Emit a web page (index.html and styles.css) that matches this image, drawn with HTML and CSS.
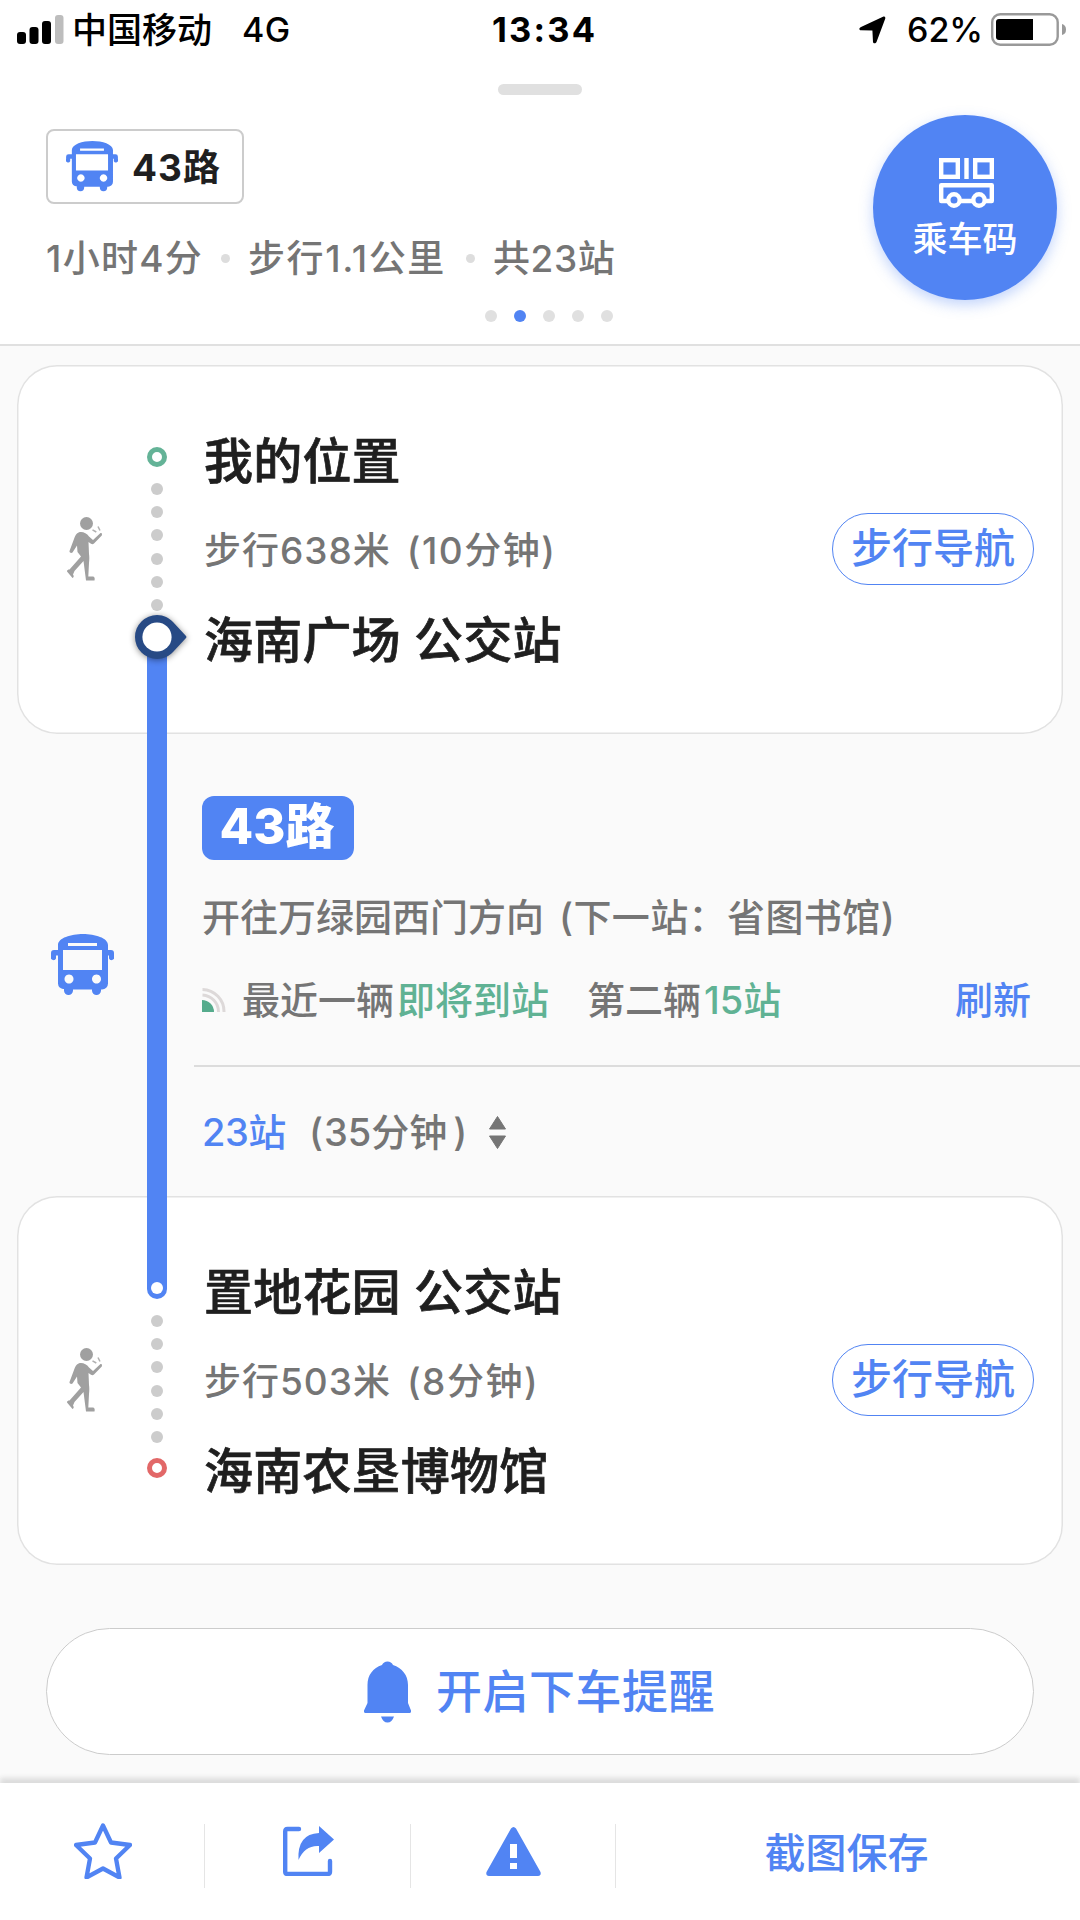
FILE: index.html
```html
<!DOCTYPE html>
<html lang="zh-CN">
<head>
<meta charset="utf-8">
<title>43路 公交路线</title>
<link rel="stylesheet" href="styles.css">
</head>
<body>
<svg class="defs" aria-hidden="true">
  <symbol id="bus" viewBox="0 0 63 62">
    <path fill-rule="evenodd" d="M7 11C7 4 20 0 32 0s25 4 25 11v5h3a3 3 0 0 1 3 3v3a2.500 2.500 0 0 1-5 2.500v-3h-1v28a6 6 0 0 1-6 6h-1v1a4.500 4.500 0 0 1-9 0v-1H22v1a4.500 4.500 0 0 1-9 0v-1.500h-1a6 6 0 0 1-5-5.500V21.500H5v3A2.500 2.500 0 0 1 0 22v-3a3 3 0 0 1 3-3h4zM17 9v3h29V9zM12 16v20h39V16zM18 40.500a4.500 4.500 0 1 0 .01 0zM45.500 40.500a4.500 4.500 0 1 0 .01 0z"/>
  </symbol>
  <symbol id="walker" viewBox="0 0 35 64">
    <ellipse cx="19.500" cy="6.500" rx="6.500" ry="6.500"/>
    <path d="M14 15c3 0 6 1.500 8 4.500l4 3.500 7.500-7c1.300-.5 1.800.8 1.300 2.500l-7.800 8c-1 1-2 1-3 .3L21.500 25l.5 12c.5 3 .3 6 0 9l-.7 13.500h4.700c1.600 0 2 1.800 1.500 4h-8.500L16.500 44l-9 10-1.500 3.500c1.200 1.500.8 3-.5 3.500L0 54.500c0-1.500 1-2 2.500-2L14 39.500 10.500 35 10 28.500l-4.500 7c-.9 1-3.300.5-3-1.500l4.500-12c1.500-4.500 3.500-7 7-7z"/>
    <path d="M25.500 12.800l3.800 2.200M31 9.500l2 4" fill="none" stroke="#b0b0b0" stroke-width="1.500"/>
  </symbol>
</svg>

<header class="status">
  <svg class="signal" viewBox="0 0 47 30"><rect x="0" y="18" width="9" height="12" rx="3"/><rect x="12.500" y="13" width="9" height="17" rx="3"/><rect x="25" y="7" width="9" height="23" rx="3"/><rect x="38" y="1" width="8.500" height="29" rx="3" fill="#bdbdbd"/></svg>
  <span class="carrier">中国移动</span>
  <span class="network">4G</span>
  <span class="clock">13:34</span>
  <svg class="locate" viewBox="0 0 27 28"><path d="M2 11 24 .8c1.500-.6 2.700.4 2.200 2L17.500 26c-.7 1.800-3.300 1.800-3.500 0l-.6-11.500L2 14.200c-2.200-.2-2.200-2.200 0-3.200z"/></svg>
  <span class="percent">62%</span>
  <svg class="battery" viewBox="0 0 76 33"><rect x="1.200" y="1.200" width="65.500" height="30.600" rx="8" fill="none" stroke="#999" stroke-width="2.400"/><path d="M8 6h34v21H8a3 3 0 0 1-3-3V9a3 3 0 0 1 3-3z"/><path d="M71 11q4 1 4 5.500t-4 5.500z" fill="#999"/></svg>
</header>

<section class="summary">
  <div class="handle"></div>
  <div class="plan">
    <div class="plan-info">
      <div class="route"><svg class="route-bus"><use href="#bus"/></svg><span class="route-name">43路</span></div>
      <div class="facts"><span class="f1">1小时4分</span><i></i><span class="f2">步行1.1公里</span><i></i><span class="f3">共23站</span></div>
    </div>
    <button class="ride-code">
      <svg class="ride-icon" viewBox="0 0 55 50"><g fill="none" stroke="#fff" stroke-width="4.400"><rect x="2.200" y="2.200" width="16.600" height="16.600"/><path d="M27.500 0v21"/><rect x="36.200" y="2.200" width="16.600" height="16.600"/><path d="M8.500 43H2.200V27.200h50.600V43H47M21 43h13" stroke-linejoin="round"/><circle cx="15" cy="42" r="5.700"/><circle cx="40" cy="42" r="5.700"/></g></svg>
      <span>乘车码</span>
    </button>
  </div>
  <div class="pager"><i></i><i class="on"></i><i></i><i></i><i></i></div>
</section>

<main class="trip">
  <section class="card">
    <svg class="walk-icon"><use href="#walker"/></svg>
    <div class="rail rail-start">
      <b class="ring green"></b>
      <div class="steps"><i></i><i></i><i></i><i></i><i></i><i></i></div>
      <div class="line"><svg class="pin" viewBox="0 0 56 52"><path d="M24 4c7 0 12 3 16 7l13 14q1 1 0 2L40 41c-4 4-9 7-16 7a22 22 0 0 1 0-44z" fill="#274a85"/><circle cx="24" cy="26" r="14.600" fill="#fff"/></svg></div>
    </div>
    <div class="stops">
      <h2>我的位置</h2>
      <p>步行638米<span class="paren">(10分钟)</span></p>
      <h2>海南广场 公交站</h2>
    </div>
    <button class="nav">步行导航</button>
  </section>

  <section class="ride">
    <svg class="ride-bus"><use href="#bus"/></svg>
    <div class="rail"><div class="line"></div></div>
    <div class="ride-info">
      <span class="badge">43路</span>
      <p class="direction">开往万绿园西门方向<span class="next">(下一站：省图书馆)</span></p>
      <div class="arrivals">
        <svg class="live" viewBox="0 0 24 24"><path d="M0 12a12 12 0 0 1 12 12H0z" fill="#55ab8c"/><path d="M.500 7A17 17 0 0 1 16.500 24M.500 1.500a22 22 0 0 1 21.500 22.500" fill="none" stroke="#ddd9d9" stroke-width="3"/></svg>
        <span class="first">最近一辆<em>即将到站</em></span><span class="second">第二辆<em>15站</em></span>
        <a class="refresh">刷新</a>
      </div>
      <div class="count"><strong>23站</strong><span class="mins">(<span class="mins-value">35分钟</span>)</span>
        <svg class="sort" viewBox="0 0 17 33"><path d="M8.500.5 16.500 13H.5zM.500 20h16L8.500 32.500z" fill="#757575" stroke="#757575" stroke-linejoin="round"/></svg>
      </div>
    </div>
  </section>

  <section class="card">
    <svg class="walk-icon"><use href="#walker"/></svg>
    <div class="rail rail-end">
      <div class="line"><b class="stop-dot"></b></div>
      <div class="steps"><i></i><i></i><i></i><i></i><i></i><i></i></div>
      <b class="ring red"></b>
    </div>
    <div class="stops">
      <h2>置地花园 公交站</h2>
      <p>步行503米<span class="paren">(8分钟)</span></p>
      <h2>海南农垦博物馆</h2>
    </div>
    <button class="nav">步行导航</button>
  </section>

  <button class="remind">
    <svg class="bell" viewBox="0 0 47 62"><path d="M18 4a6 6 0 0 1 11 0c9 3 15 10 15 20v18l3 7.500q.5 2.500-1.500 2.500h-44Q-.5 52 0 49.500L3.500 42V24C3.500 14 9 7 18 4zM17 55.500h13q-2 6-6.500 6T17 55.500z" fill="#5184f3"/></svg>
    <span>开启下车提醒</span>
  </button>
</main>

<footer class="tabs">
  <a><svg class="star" viewBox="0 0 58 56"><path d="M29 2.500l8 17 19 2.500-14 13.500 3.500 19L29 45.500l-16.500 9 3.500-19L2 22l19-2.500z" fill="none" stroke="#5184f3" stroke-width="4.300" stroke-linejoin="round"/></svg></a>
  <a><svg class="share" viewBox="0 0 51 50"><path d="M16 3H4.500Q2.200 3 2.200 5.500v40Q2.200 48 4.500 48h40q2.500 0 2.500-2.500V35" fill="none" stroke="#5184f3" stroke-width="4.400" stroke-linecap="round"/><path d="M36 0l15 13.500L36 27v-7q-14-1-20.500 14Q14 8 36 7z" fill="#5184f3"/></svg></a>
  <a><svg class="warn" viewBox="0 0 55 49"><path fill-rule="evenodd" d="M25 1.500q2.500-3 5 0L54.500 45q1 4-2.500 4H3q-3.500 0-2.500-4zM24 17v14h7V17zM24 36v6h7v-6z" fill="#5184f3"/></svg></a>
  <a class="save">截图保存</a>
</footer>
</body>
</html>
```
FILE: styles.css
```css
* { box-sizing: border-box; }
body {
  margin: 0; width: 1080px; height: 1920px; overflow: hidden;
  display: flex; flex-direction: column;
  background: #fff; color: #1f1f1f;
  font-family: Inter, "Noto Sans CJK SC", sans-serif; font-weight: 500;
}
svg { display: block; flex: none; }
span, em, strong, a { white-space: nowrap; }
button { font: inherit; border: 0; padding: 0; background: none; color: #5184f3; }
h2, p { margin: 0; }
.defs { position: absolute; width: 0; height: 0; }

.status { height: 60px; display: flex; align-items: center; padding-left: 17px; color: #000; font-size: 34px; line-height: 60px; }
.signal { width: 47px; height: 30px; margin: 0 8px 2px 0; }
.carrier { width: 170px; font-size: 35px; }
.network { width: 250px; letter-spacing: .5px; }
.clock { width: 367px; font-size: 34.500px; font-weight: 700; letter-spacing: 2.200px; }
.locate { width: 27px; height: 28px; margin-right: 21px; }
.percent { width: 84px; }
.battery { width: 76px; height: 33px; margin-bottom: 2px; }

.summary { height: 286px; display: flex; flex-direction: column; align-items: center; border-bottom: 2px solid #e0e0e0; }
.handle { width: 84px; height: 11px; margin-top: 24px; border-radius: 6px; background: #e0e0e0; flex: none; }
.plan { width: 100%; display: flex; justify-content: space-between; padding: 20px 23px 0 46px; }
.plan-info { padding-top: 14px; }
.route { width: 198px; height: 75px; display: flex; align-items: center; gap: 14px; padding-left: 18px; border: 2.500px solid #ccc; border-radius: 8px; }
.route-bus { width: 52px; height: 51px; fill: #5184f3; }
.route-name { font-size: 37px; font-weight: 700; letter-spacing: 1px; padding-bottom: 4px; }
.facts { display: flex; align-items: center; margin-top: 29.500px; height: 50px; font-size: 37px; line-height: 50px; color: #757575; }
.facts i { width: 9px; height: 9px; border-radius: 50%; background: #ddd; }
.f1 { width: 175px; letter-spacing: 1.300px; }
.f2 { width: 218px; margin-left: 18px; letter-spacing: 1.600px; }
.f3 { margin-left: 18px; letter-spacing: .6px; }
.ride-code { width: 184px; height: 185px; border-radius: 50%; background: #5184f3; color: #fff; display: flex; flex-direction: column; align-items: center; padding-top: 43px; font-size: 35px; box-shadow: 0 5px 14px rgba(81,132,243,.35); }
.ride-icon { width: 55px; height: 50px; margin-left: 2px; }
.ride-code span { line-height: 50px; margin-top: 6px; }
.pager { display: flex; gap: 17px; margin-top: 10px; padding-left: 18px; }
.pager i { width: 12px; height: 12px; border-radius: 50%; background: #e0e0e0; }
.pager .on { background: #5184f3; }

.trip { height: 1437px; flex: none; background: #fafafa; padding-top: 19px; display: flex; flex-direction: column; }
.card { height: 369px; margin: 0 17px; background: #fff; border-radius: 40px; box-shadow: inset 0 0 0 1.500px #e2e2e2; display: grid; grid-template-columns: 130px 57px 1fr 202px; padding-right: 29px; }
.walk-icon { width: 35px; height: 64px; margin: 152px 0 0 50px; fill: #a0a0a0; }
.rail { display: flex; flex-direction: column; }
.line { width: 20px; background: #5184f3; position: relative; flex: 1; }
.rail-start { padding-top: 82px; }
.ring { width: 20px; height: 20px; border-radius: 50%; border: 5px solid; background: #fff; flex: none; }
.green { color: #64b397; }
.red { color: #e26868; }
.steps { display: flex; flex-direction: column; gap: 11.200px; padding-left: 4px; }
.steps i { width: 12px; height: 12px; border-radius: 50%; background: #ccc; }
.rail-start .steps { margin: 16px 0 26px; }
.pin { position: absolute; left: -14px; top: -26px; width: 56px; height: 52px; filter: drop-shadow(0 1px 3px rgba(0,0,0,.45)); }
.stops { padding-top: 61.500px; }
.stops h2 { font-size: 49px; line-height: 70px; font-weight: 500; white-space: nowrap; -webkit-text-stroke: .7px #1f1f1f; letter-spacing: .2px; }
.stops p { font-size: 37px; line-height: 52px; margin: 28.500px 0 29px; color: #757575; letter-spacing: 1px; }
.paren { margin-left: 16px; letter-spacing: 1.500px; }
.nav { width: 202px; height: 72px; margin-top: 148px; border: 1.500px solid #5184f3; border-radius: 37px; font-size: 41px; line-height: 66px; padding-bottom: 2px; }

.ride { height: 462px; display: grid; grid-template-columns: 147px 55px 1fr; }
.ride-bus { width: 63px; height: 62px; fill: #5184f3; margin: 200px 0 0 51px; }
.ride-info { display: flex; flex-direction: column; align-items: flex-start; padding-top: 62px; color: #757575; font-size: 38px; }
.badge { width: 152px; height: 64px; border-radius: 12px; background: #5184f3; color: #fff; font-size: 49px; line-height: 62px; font-weight: 800; text-align: center; padding-right: 2px; }
.direction { line-height: 54px; margin-top: 30px; }
.next { margin-left: 15px; letter-spacing: .4px; }
.arrivals { width: 100%; height: 54px; margin-top: 29px; display: flex; align-items: center; line-height: 54px; }
.live { width: 24px; height: 24px; margin-right: 16px; }
em { font-style: normal; color: #60b294; margin-left: 3px; }
.first { width: 345px; }
.refresh { margin-left: auto; padding-right: 49px; color: #5184f3; }
.count { align-self: stretch; margin: 38px 0 0 -8px; padding: 38px 0 0 8px; border-top: 2px solid #dcdcdc; display: flex; align-items: center; line-height: 54px; }
.count strong { color: #5184f3; font-weight: 500; width: 107px; letter-spacing: -.5px; }
.mins { width: 180px; }
.mins-value { margin: 0 6px 0 1px; }
.sort { width: 17px; height: 33px; }
.rail-end .line { flex: 0 0 103px; border-radius: 0 0 10px 10px; }
.stop-dot { position: absolute; left: 4px; top: 86px; width: 12px; height: 12px; border-radius: 50%; background: #fff; }
.rail-end .steps { margin: 16px 0 15px; }

.remind { width: 988px; height: 127px; margin: 63px 46px 0; border: 1.500px solid #ccc; border-radius: 64px; background: #fff; display: flex; align-items: center; padding-left: 317px; font-size: 46px; }
.bell { width: 47px; height: 62px; margin-right: 25px; }
.remind span { line-height: 64px; padding-bottom: 2px; letter-spacing: .5px; }

.tabs { height: 137px; flex: none; background: #fff; box-shadow: 0 -5px 5px #dcdcdc; display: grid; grid-template-columns: 205px 206px 205px 1fr; padding-top: 41px; z-index: 1; }
.tabs a { height: 64px; display: flex; align-items: center; justify-content: center; border-right: 1.500px solid #e5e5e5; padding-bottom: 10px; }
.tabs .save { border: 0; color: #5184f3; font-size: 41px; padding-right: 3px; padding-bottom: 13px; }
.star { width: 58px; height: 56px; margin-left: 2px; }
.share { width: 51px; height: 50px; margin-left: 2px; }
.warn { width: 55px; height: 49px; }
```
